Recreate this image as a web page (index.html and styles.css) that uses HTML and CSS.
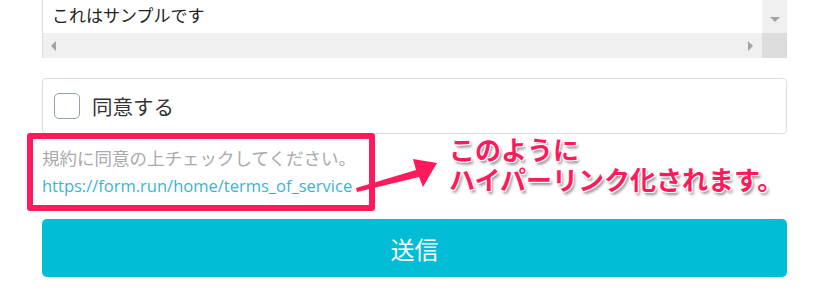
FILE: index.html
```html
<!DOCTYPE html>
<html lang="ja">
<head>
    <meta charset="UTF-8">
    <meta name="viewport" content="width=device-width, initial-scale=1.0">
    <title>フォーム</title>
    <link rel="stylesheet" href="styles.css">
</head>
<body>
    <form class="form">
        <div class="textarea">
            <div class="textarea-text">これはサンプルです</div>
            <div class="vbar"><span class="arrow-down"></span></div>
            <div class="hbar">
                <span class="arrow-left"></span>
                <span class="arrow-right"></span>
            </div>
            <div class="corner"></div>
        </div>

        <label class="agree">
            <span class="check"></span>
            <span class="agree-label">同意する</span>
        </label>

        <div class="hint">
            <p class="hint-text">規約に同意の上チェックしてください。</p>
            <a class="hint-link" href="#">https://form.run/home/terms_of_service</a>
            <div class="mark"></div>
            <svg class="arrow" width="110" height="60" viewBox="0 0 110 60">
                <polygon points="14,43 74,25 71,14 95,18 81,42 77,32 15,47" fill="#fe1a5d" />
            </svg>
            <div class="callout">
                <span class="callout-line">このように</span>
                <span class="callout-line">ハイパーリンク化されます。</span>
            </div>
        </div>

        <button type="button" class="submit">送信</button>
    </form>
</body>
</html>
```

FILE: styles.css
```css
body {
    margin: 0;
    background-color: #fff;
    font-family: "Open Sans", "Noto Sans CJK JP", sans-serif;
    color: #333;
}
.form {
    padding: 0 38px 0 42px;
}
.textarea {
    display: grid;
    grid-template-columns: 1fr 25px;
    grid-template-rows: 33px 25px;
    border-left: 1px solid #ddd;
}
.textarea-text {
    padding-left: 9px;
    font-size: 17px;
    line-height: 31px;
    color: #222;
}
.vbar {
    background-color: #f0f0f0;
    position: relative;
}
.arrow-down {
    position: absolute;
    left: 8px;
    top: 17px;
    border-left: 5px solid transparent;
    border-right: 5px solid transparent;
    border-top: 5px solid #a3a3a3;
}
.hbar {
    background-color: #f0f0f0;
    display: flex;
    align-items: center;
    justify-content: space-between;
    padding: 0 9px 0 8px;
}
.arrow-left {
    border-top: 5px solid transparent;
    border-bottom: 5px solid transparent;
    border-right: 5px solid #a3a3a3;
}
.arrow-right {
    border-top: 5px solid transparent;
    border-bottom: 5px solid transparent;
    border-left: 5px solid #a3a3a3;
}
.corner {
    background-color: #dcdcdc;
}
.agree {
    display: flex;
    align-items: center;
    gap: 12px;
    height: 54px;
    margin-top: 20px;
    padding-left: 11px;
    border: 1px solid #ddd;
    border-radius: 4px;
}
.check {
    width: 24px;
    height: 24px;
    border: 1.5px solid #94a3ad;
    border-radius: 5px;
}
.agree-label {
    font-size: 20.5px;
}
.hint {
    position: relative;
    margin-top: 11px;
    font-size: 16.5px;
    line-height: 27px;
}
.hint-text {
    margin: 0;
    font-size: 17.5px;
    color: #aaa;
}
.hint-link {
    color: #3cb2d7;
    text-decoration: none;
}
.mark {
    position: absolute;
    left: -15px;
    top: -12px;
    width: 336px;
    height: 66px;
    border: 6px solid #fe1a5d;
    border-radius: 3px;
}
.arrow {
    position: absolute;
    left: 300px;
    top: 0;
}
.callout {
    position: absolute;
    left: 407px;
    top: -10px;
    display: flex;
    flex-direction: column;
    font-size: 26px;
    line-height: 30px;
    font-weight: bold;
    white-space: nowrap;
    color: #fe1a5d;
    text-shadow: 1px 1px 0 #fff, -1px -1px 0 #fff, 1px -1px 0 #fff, -1px 1px 0 #fff, 2px 3px 3px rgba(0, 0, 0, 0.45);
}
.submit {
    display: block;
    width: 100%;
    height: 58px;
    margin-top: 20px;
    border: none;
    border-radius: 5px;
    background-color: #00bcd5;
    color: #fff;
    font-family: inherit;
    font-size: 24px;
    cursor: pointer;
}
```
